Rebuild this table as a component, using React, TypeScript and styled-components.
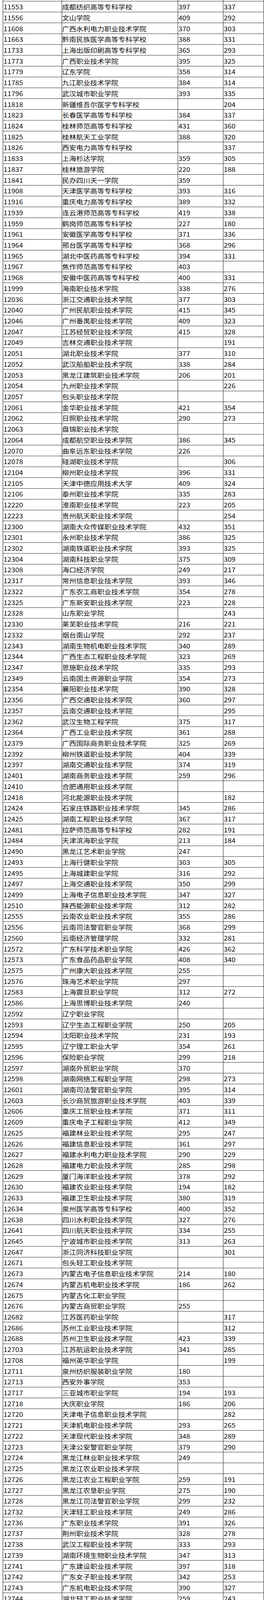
import React from "react";
import styled, { createGlobalStyle } from "styled-components";

const FRAME_H = 4581;

const Global = createGlobalStyle`
  html, body {
    margin: 0;
    padding: 0;
    background: #ffffff;
    overflow: hidden;
  }
  body {
    font-family: "Noto Sans CJK SC", "Noto Sans", sans-serif;
    color: #000;
  }
`;

const Page = styled.div`
  width: 676px;
  height: 100vh;
  overflow: hidden;
  background: #fff;
`;

const Frame = styled.div`
  width: 676px;
  transform-origin: top left;
`;

const Sheet = styled.div`
  margin-left: 7px;
  border-left: 1px solid #111;
  width: 669px;
`;

const Row = styled.div<{ $stub?: boolean }>`
  display: grid;
  grid-template-columns: 151px 297px 116px 104px;
  height: ${(p) => (p.$stub ? "4px" : "31px")};
  border-bottom: 1px solid #111;
  box-sizing: border-box;
`;

const Cell = styled.div<{ $num?: boolean }>`
  display: flex;
  align-items: center;
  height: 100%;
  border-right: 1px solid #111;
  box-sizing: border-box;
  padding-left: ${(p) => (p.$num ? "1px" : "0")};
  font-size: 18px;
  line-height: 30px;
  white-space: nowrap;
  overflow: hidden;
  color: #0a0a0a;
`;

type R = [string, string, string, string];

const rows: R[] = [
  ["11553", "成都纺织高等专科学校", "397", "337"],
  ["11556", "文山学院", "409", "292"],
  ["11608", "广西水利电力职业技术学院", "370", "303"],
  ["11663", "黔南民族医学高等专科学校", "388", "331"],
  ["11733", "上海出版印刷高等专科学校", "365", "293"],
  ["11773", "广西职业技术学院", "395", "325"],
  ["11779", "辽东学院", "358", "314"],
  ["11785", "九江职业技术学院", "384", "314"],
  ["11796", "武汉城市职业学院", "393", "335"],
  ["11818", "新疆维吾尔医学专科学校", "", "204"],
  ["11823", "长春医学高等专科学校", "384", "337"],
  ["11824", "桂林师范高等专科学校", "431", "360"],
  ["11825", "桂林航天工业学院", "388", "320"],
  ["11826", "西安电力高等专科学校", "", "337"],
  ["11833", "上海杉达学院", "359", "305"],
  ["11837", "桂林旅游学院", "220", "188"],
  ["11841", "民办四川天一学院", "359", ""],
  ["11908", "天津医学高等专科学校", "393", "316"],
  ["11916", "重庆电力高等专科学校", "389", "332"],
  ["11939", "连云港师范高等专科学校", "419", "338"],
  ["11959", "鹤岗师范高等专科学校", "227", "180"],
  ["11961", "安徽医学高等专科学校", "371", "336"],
  ["11964", "邢台医学高等专科学校", "368", "296"],
  ["11965", "湖北中医药高等专科学校", "394", "331"],
  ["11967", "焦作师范高等专科学校", "403", ""],
  ["11968", "安徽中医药高等专科学校", "400", "331"],
  ["11999", "海南职业技术学院", "338", "276"],
  ["12036", "浙江交通职业技术学院", "377", "303"],
  ["12040", "广州民航职业技术学院", "415", "345"],
  ["12046", "广州番禺职业技术学院", "409", "323"],
  ["12047", "江苏经贸职业技术学院", "415", "328"],
  ["12049", "吉林交通职业技术学院", "", "191"],
  ["12051", "湖北职业技术学院", "377", "310"],
  ["12052", "武汉船舶职业技术学院", "338", "284"],
  ["12053", "黑龙江建筑职业技术学院", "206", "201"],
  ["12054", "九州职业技术学院", "", "226"],
  ["12057", "包头职业技术学院", "", ""],
  ["12061", "金华职业技术学院", "421", "354"],
  ["12062", "日照职业技术学院", "290", "273"],
  ["12063", "盘锦职业技术学院", "", ""],
  ["12064", "成都航空职业技术学院", "386", "345"],
  ["12070", "曲阜远东职业技术学院", "226", ""],
  ["12078", "硅湖职业技术学院", "", "306"],
  ["12104", "柳州职业技术学院", "396", "331"],
  ["12105", "天津中德应用技术大学", "409", "324"],
  ["12106", "泰州职业技术学院", "335", "283"],
  ["12220", "淮南职业技术学院", "223", "205"],
  ["12223", "贵州航天职业技术学院", "", "254"],
  ["12300", "湖南大众传媒职业技术学院", "432", "351"],
  ["12301", "永州职业技术学院", "386", "325"],
  ["12302", "湖南铁道职业技术学院", "393", "325"],
  ["12304", "湖南科技职业学院", "375", "309"],
  ["12308", "海口经济学院", "249", "217"],
  ["12317", "常州信息职业技术学院", "393", "346"],
  ["12322", "广东农工商职业技术学院", "354", "278"],
  ["12325", "广东新安职业技术学院", "223", "228"],
  ["12328", "山东职业学院", "", "243"],
  ["12330", "莱芜职业技术学院", "216", "221"],
  ["12332", "烟台南山学院", "292", "237"],
  ["12343", "湖南生物机电职业技术学院", "340", "289"],
  ["12344", "广西生态工程职业技术学院", "323", "269"],
  ["12347", "恩施职业技术学院", "335", "293"],
  ["12349", "云南国土资源职业学院", "354", "273"],
  ["12354", "襄阳职业技术学院", "390", "328"],
  ["12356", "广西交通职业技术学院", "360", "297"],
  ["12357", "云南交通职业技术学院", "", "295"],
  ["12362", "武汉生物工程学院", "375", "317"],
  ["12364", "广西工业职业技术学院", "361", "288"],
  ["12379", "广西国际商务职业技术学院", "325", "269"],
  ["12392", "柳州铁道职业技术学院", "404", "339"],
  ["12397", "湖南交通职业技术学院", "374", "319"],
  ["12401", "湖南商务职业技术学院", "259", "296"],
  ["12410", "合肥通用职业技术学院", "", ""],
  ["12418", "河北能源职业技术学院", "", "182"],
  ["12424", "石家庄铁路职业技术学院", "345", "286"],
  ["12425", "湖南工程职业技术学院", "367", "317"],
  ["12481", "拉萨师范高等专科学校", "282", "191"],
  ["12484", "天津滨海职业学院", "213", "184"],
  ["12490", "黑龙江艺术职业学院", "247", ""],
  ["12493", "上海行健职业学院", "303", "305"],
  ["12495", "上海城建职业学院", "316", "292"],
  ["12497", "上海交通职业技术学院", "350", "299"],
  ["12499", "上海电子信息职业技术学院", "347", "327"],
  ["12510", "陕西能源职业技术学院", "312", "282"],
  ["12555", "云南农业职业技术学院", "355", "286"],
  ["12556", "云南司法警官职业学院", "368", "299"],
  ["12560", "云南经济管理学院", "332", "281"],
  ["12572", "广东科学技术职业学院", "426", "362"],
  ["12573", "广东食品药品职业学院", "408", "340"],
  ["12575", "广州康大职业技术学院", "255", ""],
  ["12576", "珠海艺术职业学院", "297", ""],
  ["12583", "上海震旦职业学院", "312", "272"],
  ["12586", "上海思博职业技术学院", "240", ""],
  ["12592", "辽宁职业学院", "", ""],
  ["12593", "辽宁生态工程职业学院", "250", "205"],
  ["12594", "沈阳职业技术学院", "231", "193"],
  ["12595", "辽宁理工职业大学", "354", "261"],
  ["12596", "保险职业学院", "299", "218"],
  ["12597", "湖南外贸职业学院", "370", ""],
  ["12598", "湖南网络工程职业学院", "298", "273"],
  ["12601", "湖南司法警官职业学院", "395", "314"],
  ["12603", "长沙商贸旅游职业技术学院", "403", "339"],
  ["12606", "重庆工贸职业技术学院", "371", "311"],
  ["12609", "重庆电子工程职业学院", "412", "349"],
  ["12625", "福建林业职业技术学院", "295", "247"],
  ["12626", "福建信息职业技术学院", "361", "297"],
  ["12627", "福建水利电力职业技术学院", "290", "229"],
  ["12628", "福建电力职业技术学院", "285", "298"],
  ["12629", "厦门海洋职业技术学院", "378", "292"],
  ["12630", "福建农业职业技术学院", "194", "182"],
  ["12633", "福建卫生职业技术学院", "380", "319"],
  ["12634", "泉州医学高等专科学校", "400", "352"],
  ["12638", "四川水利职业技术学院", "327", "276"],
  ["12641", "四川航天职业技术学院", "334", "255"],
  ["12645", "宁波城市职业技术学院", "313", "263"],
  ["12647", "浙江同济科技职业学院", "", "301"],
  ["12671", "包头轻工职业技术学院", "", ""],
  ["12673", "内蒙古电子信息职业技术学院", "214", "180"],
  ["12674", "内蒙古机电职业技术学院", "186", "262"],
  ["12675", "内蒙古化工职业学院", "", ""],
  ["12676", "内蒙古商贸职业学院", "255", ""],
  ["12682", "江苏医药职业学院", "", "317"],
  ["12686", "苏州工业职业技术学院", "", "312"],
  ["12688", "苏州卫生职业技术学院", "423", "339"],
  ["12703", "江苏航运职业技术学院", "341", "285"],
  ["12708", "福州英华职业学院", "", "199"],
  ["12711", "泉州纺织服装职业学院", "180", ""],
  ["12713", "西安外事学院", "353", ""],
  ["12717", "三亚城市职业学院", "194", "193"],
  ["12718", "大庆职业学院", "186", "206"],
  ["12720", "天津电子信息职业技术学院", "", "282"],
  ["12721", "天津机电职业技术学院", "293", "265"],
  ["12722", "天津现代职业技术学院", "348", "289"],
  ["12723", "天津公安警官职业学院", "379", "290"],
  ["12724", "黑龙江林业职业技术学院", "249", ""],
  ["12725", "黑龙江农业职业技术学院", "", ""],
  ["12726", "黑龙江农业工程职业学院", "259", "191"],
  ["12727", "黑龙江农垦职业学院", "275", "190"],
  ["12728", "黑龙江司法警官职业学院", "299", "232"],
  ["12732", "天津轻工职业技术学院", "249", "286"],
  ["12736", "广东职业技术学院", "391", "326"],
  ["12737", "荆州职业技术学院", "328", "278"],
  ["12738", "武汉工程职业技术学院", "333", "293"],
  ["12739", "湖南环境生物职业技术学院", "347", "313"],
  ["12741", "广东建设职业技术学院", "397", "318"],
  ["12742", "广东女子职业技术学院", "342", "253"],
  ["12743", "广东机电职业技术学院", "390", "327"],
  ["12744", "湖北轻工职业技术学院", "259", "243"],
];

export default function App() {
  // the window may be shorter than the 4581px frame; squeeze the sheet to fit it
  const h = typeof window !== "undefined" ? window.innerHeight : FRAME_H;
  const k = Math.min(1, h / FRAME_H);
  return (
    <Page>
      <Global />
      <Frame style={{ transform: `scaleY(${k})` }}>
        <Sheet>
          <Row $stub>
            <Cell />
            <Cell />
            <Cell />
            <Cell />
          </Row>
          {rows.map((r) => (
            <Row key={r[0]}>
              <Cell $num>{r[0]}</Cell>
              <Cell>{r[1]}</Cell>
              <Cell $num>{r[2]}</Cell>
              <Cell $num>{r[3]}</Cell>
            </Row>
          ))}
        </Sheet>
      </Frame>
    </Page>
  );
}
